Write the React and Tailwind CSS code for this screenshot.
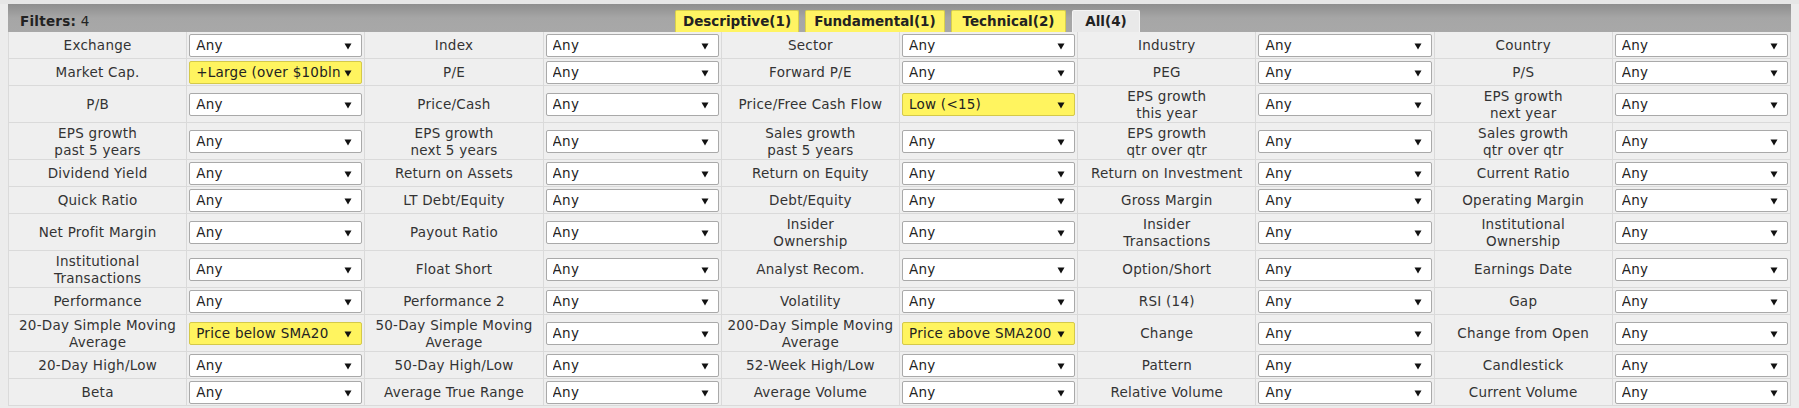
const rows = [
  [
    [["Exchange"], "Any"],
    [["Index"], "Any"],
    [["Sector"], "Any"],
    [["Industry"], "Any"],
    [["Country"], "Any"],
  ],
  [
    [["Market Cap."], "+Large (over $10bln)", true],
    [["P/E"], "Any"],
    [["Forward P/E"], "Any"],
    [["PEG"], "Any"],
    [["P/S"], "Any"],
  ],
  [
    [["P/B"], "Any"],
    [["Price/Cash"], "Any"],
    [["Price/Free Cash Flow"], "Low (<15)", true],
    [["EPS growth", "this year"], "Any"],
    [["EPS growth", "next year"], "Any"],
  ],
  [
    [["EPS growth", "past 5 years"], "Any"],
    [["EPS growth", "next 5 years"], "Any"],
    [["Sales growth", "past 5 years"], "Any"],
    [["EPS growth", "qtr over qtr"], "Any"],
    [["Sales growth", "qtr over qtr"], "Any"],
  ],
  [
    [["Dividend Yield"], "Any"],
    [["Return on Assets"], "Any"],
    [["Return on Equity"], "Any"],
    [["Return on Investment"], "Any"],
    [["Current Ratio"], "Any"],
  ],
  [
    [["Quick Ratio"], "Any"],
    [["LT Debt/Equity"], "Any"],
    [["Debt/Equity"], "Any"],
    [["Gross Margin"], "Any"],
    [["Operating Margin"], "Any"],
  ],
  [
    [["Net Profit Margin"], "Any"],
    [["Payout Ratio"], "Any"],
    [["Insider", "Ownership"], "Any"],
    [["Insider", "Transactions"], "Any"],
    [["Institutional", "Ownership"], "Any"],
  ],
  [
    [["Institutional", "Transactions"], "Any"],
    [["Float Short"], "Any"],
    [["Analyst Recom."], "Any"],
    [["Option/Short"], "Any"],
    [["Earnings Date"], "Any"],
  ],
  [
    [["Performance"], "Any"],
    [["Performance 2"], "Any"],
    [["Volatility"], "Any"],
    [["RSI (14)"], "Any"],
    [["Gap"], "Any"],
  ],
  [
    [["20-Day Simple Moving", "Average"], "Price below SMA20", true],
    [["50-Day Simple Moving", "Average"], "Any"],
    [["200-Day Simple Moving", "Average"], "Price above SMA200", true],
    [["Change"], "Any"],
    [["Change from Open"], "Any"],
  ],
  [
    [["20-Day High/Low"], "Any"],
    [["50-Day High/Low"], "Any"],
    [["52-Week High/Low"], "Any"],
    [["Pattern"], "Any"],
    [["Candlestick"], "Any"],
  ],
  [
    [["Beta"], "Any"],
    [["Average True Range"], "Any"],
    [["Average Volume"], "Any"],
    [["Relative Volume"], "Any"],
    [["Current Volume"], "Any"],
  ],
];

const tabs = [
  { name: "Descriptive(1)", w: "w-[124px]" },
  { name: "Fundamental(1)", w: "w-[140px]" },
  { name: "Technical(2)", w: "w-[115px]" },
  { name: "All(4)", w: "w-[68px]", active: true },
];

function Arrow() {
  return (
    <svg width="8" height="8" viewBox="0 0 8 8" className="shrink-0">
      <path d="M0.5 1.5 L7.5 1.5 L4 7.5 Z" fill="#111" />
    </svg>
  );
}

function FakeSelect({ value, active }) {
  return (
    <div
      className={`flex h-[23px] w-full items-center rounded-[2px] border pl-[6px] pr-[9px] ${
        active
          ? "border-[#d4c94a] bg-[#fff45f]"
          : "border-[#a9a9a9] bg-white"
      }`}
    >
      <span className="min-w-0 flex-1 overflow-hidden whitespace-nowrap text-[#222]">
        {value}
      </span>
      <span className="ml-[3px]">
        <Arrow />
      </span>
    </div>
  );
}

export default function App() {
  return (
    <div className="h-[408px] w-[1799px] overflow-hidden bg-[#ececec] font-['DejaVu_Sans',Verdana,sans-serif] text-[13.5px] tracking-[0.25px] text-[#333]">
      <div className="h-[4px] bg-[#e6e6e6]" />
      <div className="mx-[8px] flex h-[28px] bg-gradient-to-b from-[#8e8e8e] via-[#a6a6a6] to-[#a8a8a8]">
        <div className="flex flex-1 items-center pl-[12px] pt-[6px] text-[#222]">
          <b>Filters:</b>&nbsp;4
        </div>
        <div className="flex items-end gap-[6px] pl-[4px]">
          {tabs.map((t) => (
            <div
              key={t.name}
              className={`flex h-[22px] items-center justify-center rounded-t-[2px] border border-b-0 font-bold tracking-[0px] text-[#222] ${t.w} ${
                t.active
                  ? "border-[#f4f4f4] bg-[#e9e9e9]"
                  : "border-[#d8cf4c] bg-[#fff463]"
              }`}
            >
              {t.name}
            </div>
          ))}
        </div>
        <div className="flex-1" />
      </div>
      <div className="mx-[8px] border-l border-[#dadada] bg-[#efefef]">
        {rows.map((row, ri) => (
          <div key={ri} className="grid grid-cols-10">
            {row.map(([label, value, active], ci) => [
              <div
                key={`l${ci}`}
                className="flex flex-col items-center justify-center border-b border-r border-[#dadada] px-[2px] pb-[1px] pt-[2px] text-center leading-[16.5px]"
              >
                {label.map((l) => (
                  <span key={l} className="whitespace-nowrap">
                    {l}
                  </span>
                ))}
              </div>,
              <div
                key={`s${ci}`}
                className="flex items-center border-b border-r border-[#dadada] px-[2px] pb-[1px] pt-[2px]"
              >
                <FakeSelect value={value} active={active} />
              </div>,
            ])}
          </div>
        ))}
      </div>
    </div>
  );
}
